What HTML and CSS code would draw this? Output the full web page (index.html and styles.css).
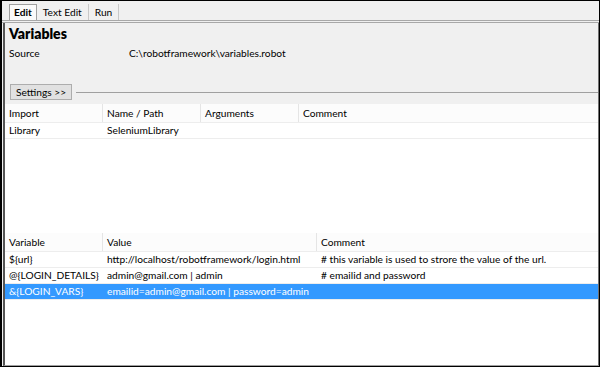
FILE: index.html
```html
<!DOCTYPE html>
<html lang="en">
<head>
  <meta charset="UTF-8">
  <title>Variables</title>
  <link rel="stylesheet" href="styles.css">
</head>
<body>
  <div class="window">
    <div class="tabs">
      <span class="tab active">Edit</span>
      <span class="tab">Text Edit</span>
      <span class="tab">Run</span>
    </div>

    <div class="panel">
      <h1>Variables</h1>
      <div class="source">
        <span class="label">Source</span>
        <span>C:\robotframework\variables.robot</span>
      </div>

      <div class="settings">
        <button class="btn">Settings &gt;&gt;</button>
        <div class="rule"></div>
      </div>

      <div class="grid imports">
        <div class="row head">
          <div class="cell">Import</div>
          <div class="cell">Name / Path</div>
          <div class="cell">Arguments</div>
          <div class="cell">Comment</div>
        </div>
        <div class="row">
          <div class="cell">Library</div>
          <div class="cell">SeleniumLibrary</div>
          <div class="cell"></div>
          <div class="cell"></div>
        </div>
      </div>

      <div class="grid vars">
        <div class="row head">
          <div class="cell">Variable</div>
          <div class="cell">Value</div>
          <div class="cell">Comment</div>
        </div>
        <div class="row">
          <div class="cell">${url}</div>
          <div class="cell">http://localhost/robotframework/login.html</div>
          <div class="cell"># this variable is used to strore the value of the url.</div>
        </div>
        <div class="row">
          <div class="cell">@{LOGIN_DETAILS}</div>
          <div class="cell">admin@gmail.com | admin</div>
          <div class="cell"># emailid and password</div>
        </div>
        <div class="row selected">
          <div class="cell">&amp;{LOGIN_VARS}</div>
          <div class="cell">emailid=admin@gmail.com | password=admin</div>
          <div class="cell"></div>
        </div>
      </div>
    </div>
  </div>
</body>
</html>
```

FILE: styles.css
```css
    body {
      margin: 0;
      font-family: Lato, "Noto Sans", sans-serif;
      font-size: 10.2px;
      color: #000;
      background: #f0f0f0;
    }
    .window {
      width: 600px;
      height: 367px;
      box-sizing: border-box;
      border: 1px solid #000;
      border-left-width: 2px;
      background: #f0f0f0;
      display: flex;
      flex-direction: column;
    }
    .tabs {
      display: flex;
      height: 16px;
      padding: 3px 0 0 7px;
      border-bottom: 3px double #a8a8a8;
    }
    .tab {
      padding: 0 6px 0 6px;
      line-height: 16px;
      border-right: 1px solid #c8c8c8;
    }
    .tab.active {
      font-weight: bold;
      background: #fafafa;
      border: 1px solid #a0a0a0;
      border-bottom: none;
      line-height: 15px;
      padding: 0 4px;
    }
    .panel {
      flex: 1;
      display: flex;
      flex-direction: column;
      margin-left: 1px;
      border-left: 2px solid #555;
      border-right: 1px solid #707070;
      border-bottom: 1px solid #a0a0a0;
    }
    h1 {
      margin: 2px 0 0 4px;
      font-size: 14px;
      line-height: 18px;
      font-family: Lato, "Liberation Sans", sans-serif;
      font-weight: 800;
    }
    .source {
      display: flex;
      margin: 2px 0 0 4px;
      line-height: 16px;
    }
    .source .label {
      width: 120px;
    }
    .settings {
      display: flex;
      align-items: center;
      margin: 23px 0 4px 5px;
    }
    .btn {
      font: inherit;
      height: 16px;
      width: 62px;
      padding: 0;
      border: 1px solid #adadad;
      background: #e1e1e1;
      color: #000;
    }
    .rule {
      flex: 1;
      height: 1px;
      margin-left: 4px;
      background: #a0a0a0;
    }
    .grid {
      background: #fff;
    }
    .imports {
      height: 129px;
    }
    .vars {
      flex: 1;
    }
    .row {
      display: grid;
      height: 15px;
      line-height: 15px;
      border-bottom: 1px solid #ededed;
    }
    .imports .row {
      grid-template-columns: 98px 98px 98px 1fr;
    }
    .vars .row {
      grid-template-columns: 98px 214px 1fr;
    }
    .cell {
      padding-left: 4px;
      white-space: nowrap;
      overflow: hidden;
    }
    .head {
      background: #fcfcfc;
      height: 18px;
      line-height: 18px;
    }
    .head .cell {
      border-right: 1px solid #e5e5e5;
    }
    .head .cell:last-child {
      border-right: none;
    }
    .selected {
      background: #3399ff;
      color: #fff;
    }
```
